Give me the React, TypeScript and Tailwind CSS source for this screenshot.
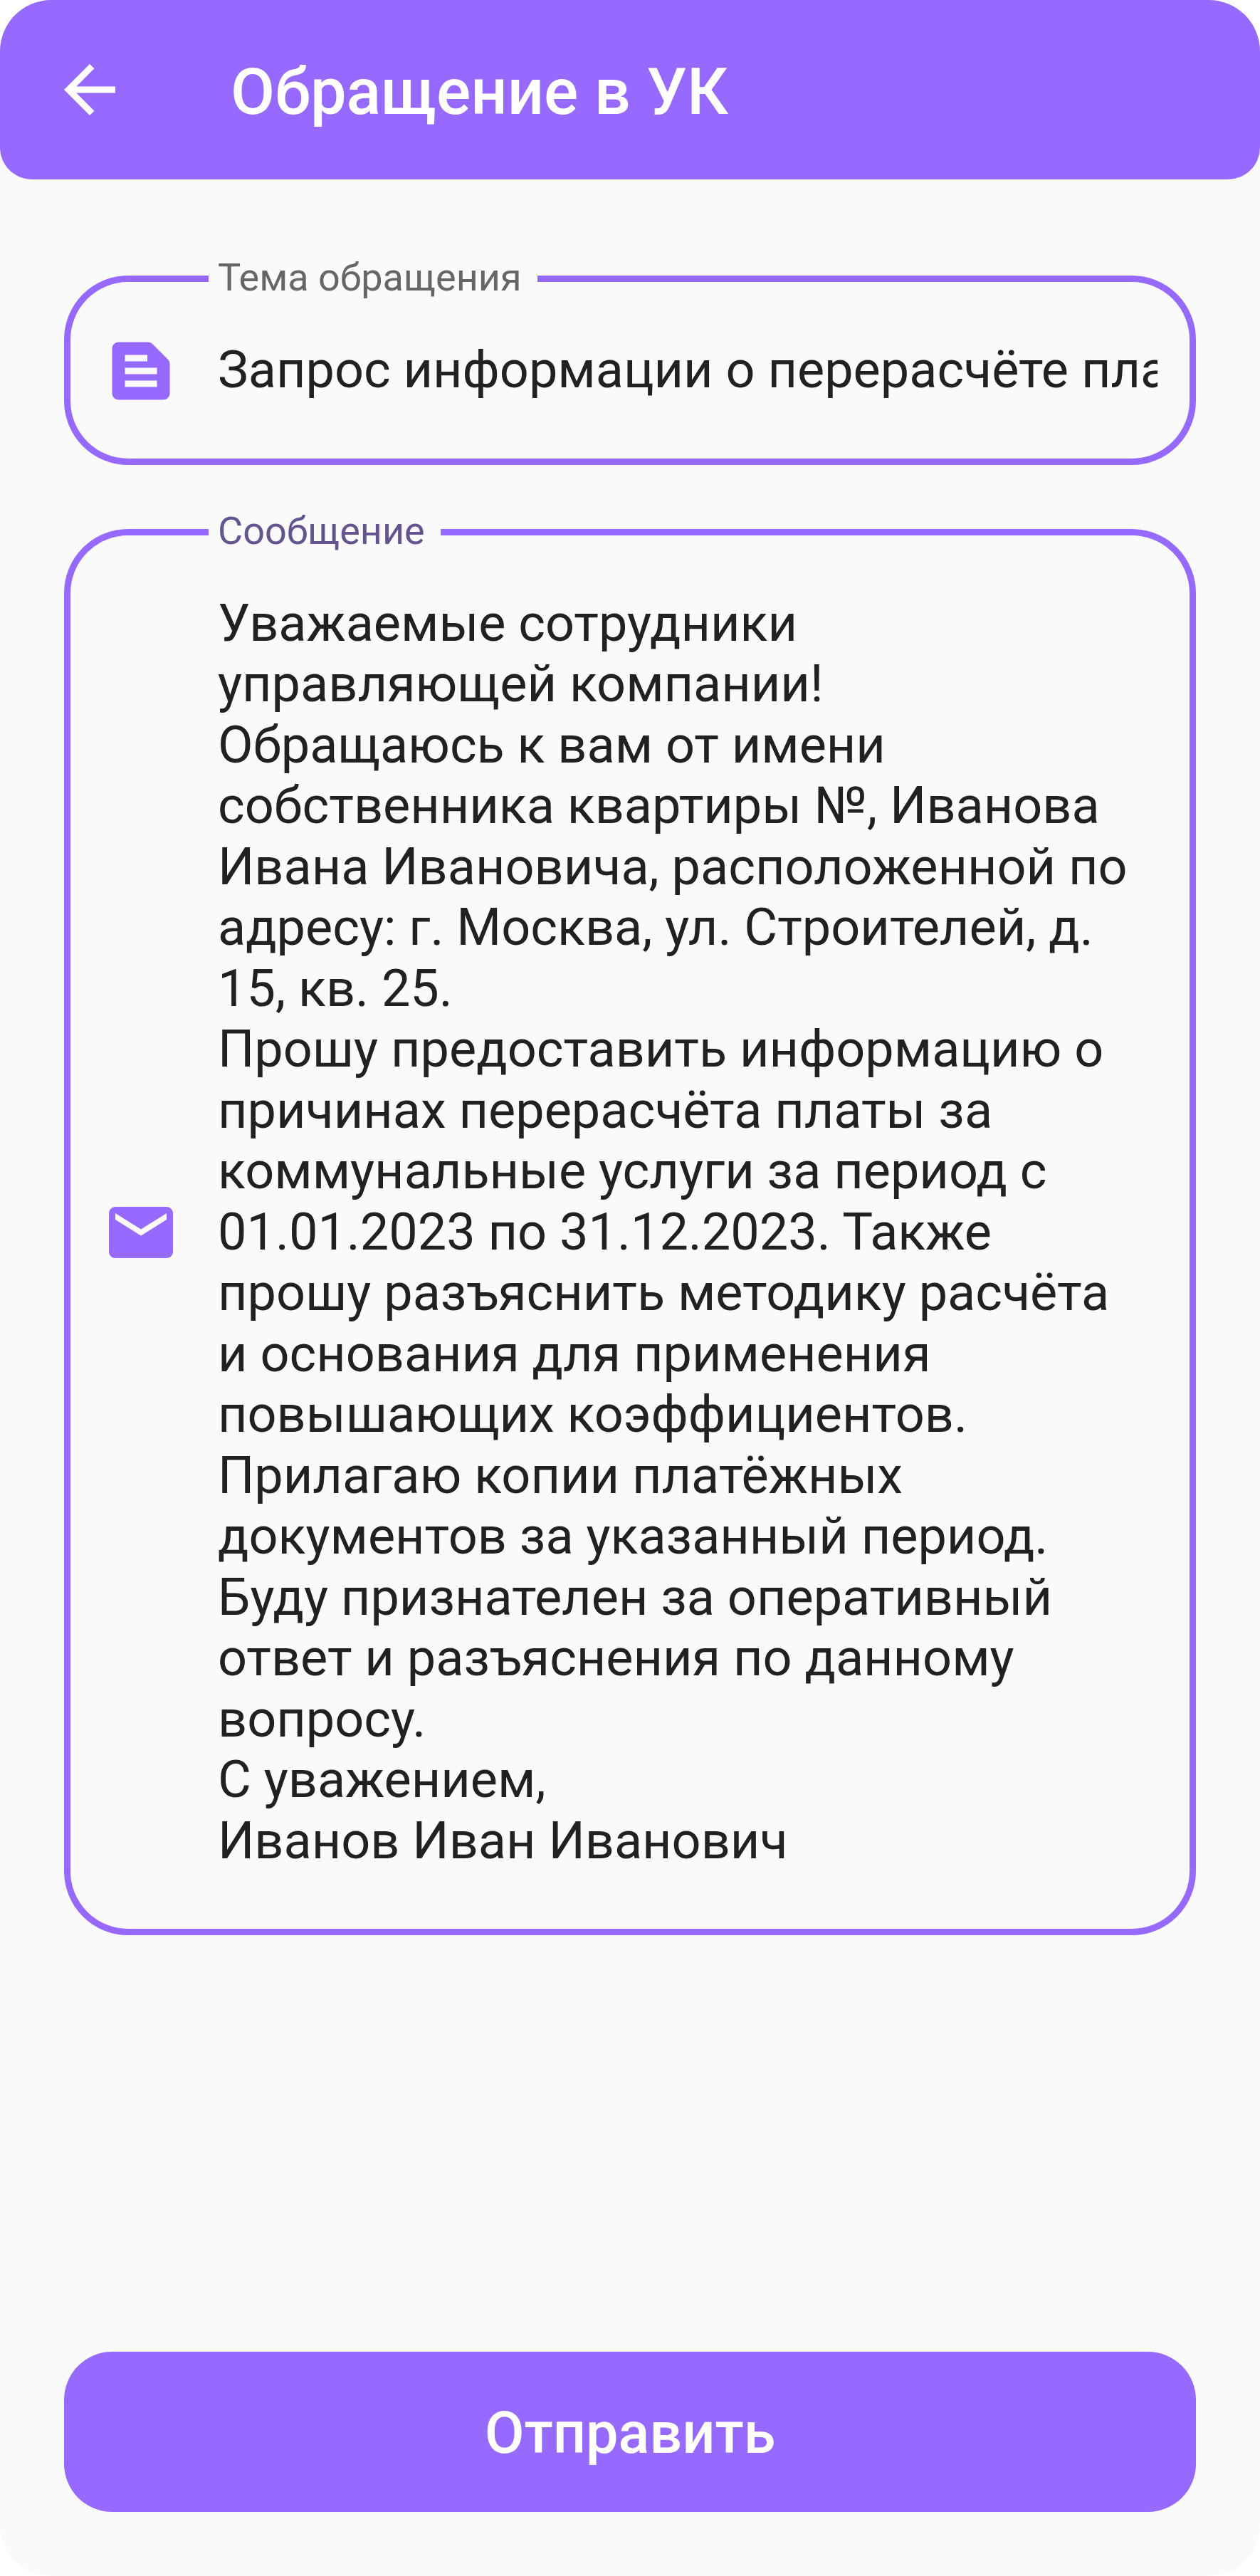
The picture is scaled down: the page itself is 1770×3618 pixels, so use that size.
import type { ReactNode } from "react";

const ICONS = {
  back: "M20 11H7.83l5.59-5.59L12 4l-8 8 8 8 1.41-1.41L7.83 13H20v-2z",
  subject:
    "M20.41 8.41l-4.83-4.83c-.37-.37-.88-.58-1.41-.58H5c-1.1 0-2 .9-2 2v14c0 1.1.9 2 2 2h14c1.1 0 2-.9 2-2V9.83c0-.53-.21-1.04-.59-1.42zM7 7h7v2H7V7zm10 10H7v-2h10v2zm0-4H7v-2h10v2z",
  mail: "M20 4H4c-1.1 0-1.99.9-1.99 2L2 18c0 1.1.9 2 2 2h16c1.1 0 2-.9 2-2V6c0-1.1-.9-2-2-2zm0 4l-8 5-8-5V6l8 5 8-5v2z",
};

function Icon({ path, className = "" }: { path: string; className?: string }) {
  return (
    <svg
      viewBox="0 0 24 24"
      className={`size-[108px] shrink-0 fill-current ${className}`}
      aria-hidden="true"
    >
      <path d={path} />
    </svg>
  );
}

function Field({
  label,
  labelClass,
  boxClass,
  icon,
  children,
}: {
  label: string;
  labelClass: string;
  boxClass: string;
  icon: string;
  children: ReactNode;
}) {
  return (
    <div
      className={`relative flex items-center rounded-[90px] border-[9px] border-[#966AFF] pl-[45px] pr-[45px] text-[#966AFF] ${boxClass}`}
    >
      <span
        className={`absolute top-[-38px] left-[193.5px] bg-[#FAFAFA] pl-[13.5px] text-[54px] leading-[63px] whitespace-nowrap ${labelClass}`}
      >
        {label}
      </span>
      <Icon path={icon} className="mt-[1.5px]" />
      {children}
    </div>
  );
}

const MESSAGE = [
  "Уважаемые сотрудники",
  "управляющей компании!",
  "Обращаюсь к вам от имени",
  "собственника квартиры №, Иванова",
  "Ивана Ивановича, расположенной по",
  "адресу: г. Москва, ул. Строителей, д.",
  "15, кв. 25.",
  "Прошу предоставить информацию о",
  "причинах перерасчёта платы за",
  "коммунальные услуги за период с",
  "01.01.2023 по 31.12.2023. Также",
  "прошу разъяснить методику расчёта",
  "и основания для применения",
  "повышающих коэффициентов.",
  "Прилагаю копии платёжных",
  "документов за указанный период.",
  "Буду признателен за оперативный",
  "ответ и разъяснения по данному",
  "вопросу.",
  "С уважением,",
  "Иванов Иван Иванович",
];

export default function App() {
  return (
    <div className="bg-white font-['Roboto',sans-serif]">
      <div className="flex h-[3618px] w-[1770px] flex-col overflow-hidden rounded-[72px] bg-[#FAFAFA]">
        <header className="flex h-[252px] shrink-0 items-center rounded-b-[45px] bg-[#966AFF] pl-[72px] text-white">
          <button aria-label="Назад" className="flex">
            <Icon path={ICONS.back} />
          </button>
          <h1 className="ml-[144px] pt-[8px] text-[90px] leading-[106px] font-medium">
            Обращение в УК
          </h1>
        </header>

        <main className="flex flex-1 flex-col px-[90px] pt-[135px] pb-[90px]">
          <Field
            label="Тема обращения"
            labelClass="w-[462.5px] text-[#666666]"
            boxClass="h-[265.5px]"
            icon={ICONS.subject}
          >
            <p className="ml-[54px] h-[86px] flex-1 overflow-hidden text-[72px] leading-[85.5px] whitespace-nowrap text-[#212121]">
              Запрос информации о перерасчёте платы
            </p>
          </Field>

          <Field
            label="Сообщение"
            labelClass="w-[326.5px] text-[#65558F]"
            boxClass="mt-[90px] h-[1975.5px]"
            icon={ICONS.mail}
          >
            <div className="ml-[54px] flex-1 text-[72px] leading-[85.5px] whitespace-nowrap text-[#212121]">
              {MESSAGE.map((line) => (
                <p key={line}>{line}</p>
              ))}
            </div>
          </Field>

          <button className="mt-auto flex h-[225px] items-center justify-center rounded-[67.5px] bg-[#966AFF] pt-[4px] text-[81px] leading-[95px] font-medium text-white">
            Отправить
          </button>
        </main>
      </div>
    </div>
  );
}
